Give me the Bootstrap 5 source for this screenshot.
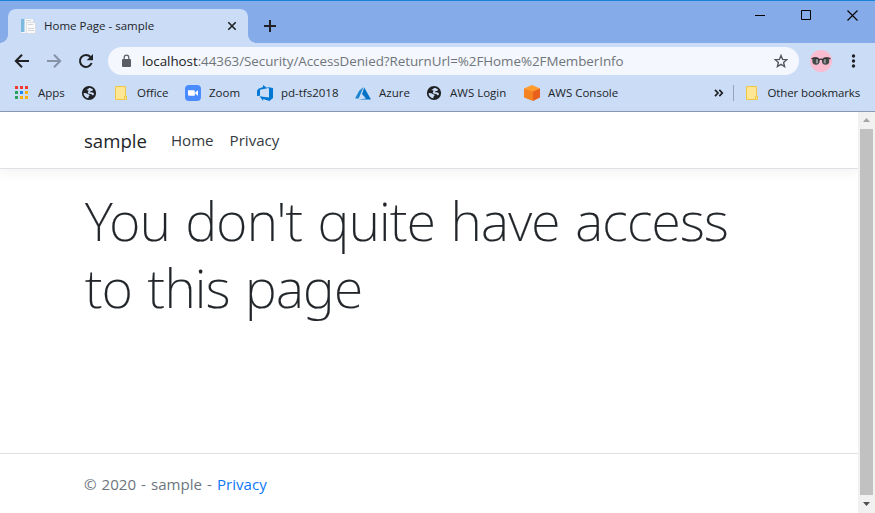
<!DOCTYPE html>
<html lang="en">
<head>
<meta charset="utf-8">
<meta name="viewport" content="width=device-width, initial-scale=1">
<title>Home Page - sample</title>
<link href="https://cdn.jsdelivr.net/npm/bootstrap@5.3.0/dist/css/bootstrap.min.css" rel="stylesheet">
<style>
  body { width: 875px; height: 513px; overflow: hidden; font-family: "Open Sans", "Noto Sans", sans-serif; color: #212529; background: #fff; }
  svg { display: block; flex: none; }
  .tabstrip { height: 43px; background: #85abe9; border-top: 1px solid #1683d9; padding-left: 8px; }
  .browser-tab { width: 240px; height: 34px; margin-top: 8px; background: #cbdcf6; border-radius: 8px 8px 0 0; padding: 0 11px 0 12px; position: relative; }
  .browser-tab::before, .browser-tab::after { content: ""; position: absolute; bottom: 0; width: 8px; height: 8px; }
  .browser-tab::before { left: -8px; background: radial-gradient(circle at 0 0, transparent 7.5px, #cbdcf6 8px); }
  .browser-tab::after { right: -8px; background: radial-gradient(circle at 100% 0, transparent 7.5px, #cbdcf6 8px); }
  .tab-title { font-size: 11.5px; margin-left: 8px; white-space: nowrap; }
  .newtab { margin: 19px 0 0 16px; }
  .winbuttons { gap: 35px; padding: 9px 17px 0 0; }
  .toolbar { height: 34px; background: #cbdcf6; padding: 4px 14px 2px 14px; }
  .omnibox { width: 691px; height: 28px; margin-left: 14px; border-radius: 14px; background: #f4f7fd; padding: 0 11px 0 13px; }
  .address { font-size: 13.4px; letter-spacing: -.05px; color: #70757a; margin-left: 10px; white-space: nowrap; }
  .address b { font-weight: 400; color: #202124; }
  .kebab { margin: 0 2px 0 17px; }
  .bookmarks { height: 35px; background: #cbdcf6; border-bottom: 1px solid #8b9ab3; padding: 0 15px 2px 14px; font-size: 11.5px; white-space: nowrap; }
  .marks { display: grid; grid-template-columns: 67px 32px 72px 72px 98px 71px 98px 96px; }
  .marks > div, .others { display: flex; align-items: center; gap: 8px; }
  .others span { letter-spacing: -.13px; }
  .split { width: 1px; height: 16px; background: #93a3c0; margin: 0 10px 0 9px; }
  .viewport { height: 401px; }
  .webpage { width: 858px; }
  .topnav { height: 57px; border-bottom: 1px solid #dee2e6; box-shadow: 0 4px 12px rgba(0,0,0,.05); padding: 1px 0 0 84px; }
  .brand-name { font-size: 18.6px; }
  .navitem { font-size: 15.1px; color: #343a40; }
  .denied { font-family: "Noto Sans", "Open Sans", sans-serif; font-size: 53.5px; font-weight: 200; letter-spacing: -.72px; word-spacing: 2.2px; line-height: 67.2px; padding: 18px 84px 0 85px; height: 284px; margin: 0; white-space: nowrap; -webkit-text-stroke: .2px #212529; }
  .pagefoot { height: 60px; border-top: 1px solid #dee2e6; padding: 2px 0 0 84px; font-size: 15.1px; word-spacing: 1.1px; color: #6c757d; }
  .pagefoot a { color: #0d78f7; text-decoration: none; }
  .scrollbar { width: 17px; background: #f1f1f1; padding: 6px 2px 7px; }
  .thumb { width: 13px; height: 366px; background: #c1c1c1; }
</style>
</head>
<body>
<svg width="0" height="0" class="position-absolute">
  <symbol id="globe" viewBox="0 0 16 16"><circle cx="8" cy="8" r="7.100" fill="#202124"/><path d="M2.600 8c1.600-.1 3 .1 4 .9 1 .2 2 .5 2 1.300 0 .8-.9.900-1.100 1.600l-.2 1.500C4.600 12.800 2.600 10.700 2.600 8zM8 3c1.800 0 3.200.6 4.100 1.800-.2.900-1.200 1.200-2.200 1.300-.5.300-.9.500-1.200.9.300.5 1.800.2 2.800.5.8.300 1.300.7 1.500 1.300-.2.700-.5 1.200-1 1.700-.7-.2-.9-.8-1.500-1.200-1.200-.4-2.700-.1-3.400-1-.6-1-.2-2 .7-2.400C7.100 5.400 6 5.700 5.500 5.100 6 4.300 7.300 4.200 8 3z" fill="#cbdcf6"/></symbol>
  <symbol id="folder" viewBox="0 0 16 16"><path d="M2.500 1.500h10v9.500h1v3.500h-11z" fill="#ffe694" stroke="#efc84a"/><path d="M11.500 14v-2.500h1.500" fill="none" stroke="#efc84a"/></symbol>
</svg>

<div class="tabstrip d-flex align-items-start">
  <div class="browser-tab d-flex align-items-center">
    <svg width="16" height="16" viewBox="0 0 16 16"><path d="M1 1h12v14H1z" fill="#f4f6f8"/><path d="M1 1h4v13H1z" fill="#7bb9df"/><path d="M4 1h1v13H4z" fill="#b9d9ed"/><path d="M6.500 4.500h9v11h-9z" fill="#f8f8f8" stroke="#cdd1d5" stroke-width=".6"/><path d="M6 2.500h5M8 6.500h5M8 10.500h6M8 12.500h6" stroke="#d2d6da"/></svg>
    <span class="tab-title">Home Page - sample</span>
    <svg class="ms-auto" width="10" height="10" viewBox="0 0 10 10"><path d="M1.300 1.300l7.400 7.400M8.700 1.300L1.300 8.700" stroke="#202124" stroke-width="1.600"/></svg>
  </div>
  <svg class="newtab" width="12" height="12" viewBox="0 0 12 12"><path d="M6 0v12M0 6h12" stroke="#202124" stroke-width="2"/></svg>
  <div class="winbuttons d-flex ms-auto">
    <svg width="11" height="11" viewBox="0 0 11 11"><path d="M0 5.500h10" stroke="#000"/></svg>
    <svg width="11" height="11" viewBox="0 0 11 11"><path d="M.5.5h9v9h-9z" fill="none" stroke="#000"/></svg>
    <svg width="11" height="11" viewBox="0 0 11 11"><path d="M.5.5l10 10M10.500.5l-10 10" stroke="#000" stroke-width="1.100"/></svg>
  </div>
</div>

<div class="toolbar d-flex align-items-center">
  <svg width="16" height="16" viewBox="0 0 16 16"><path d="M15 8H2.500M8 1.700L1.800 8 8 14.300" fill="none" stroke="#202124" stroke-width="2"/></svg>
  <svg class="ms-3" width="16" height="16" viewBox="0 0 16 16"><path d="M1 8h12.500M8 1.700L14.200 8 8 14.300" fill="none" stroke="#8792a7" stroke-width="2"/></svg>
  <svg class="ms-3" width="16" height="16" viewBox="0 0 16 16"><path d="M12.500 4A6 6 0 1 0 13.600 10" fill="none" stroke="#202124" stroke-width="2"/><path d="M15 1v6.300H8.700z" fill="#202124"/></svg>
  <div class="omnibox d-flex align-items-center">
    <svg width="11" height="14" viewBox="0 0 11 14"><path d="M2 5h7q1 0 1 1v6q0 1-1 1H2q-1 0-1-1V6q0-1 1-1z" fill="#5a5e63"/><path d="M3.200 5.500V3.400a2.300 2.300 0 0 1 4.600 0v2.100" fill="none" stroke="#5a5e63" stroke-width="1.200"/></svg>
    <span class="address"><b>localhost</b>:44363/Security/AccessDenied?ReturnUrl=%2FHome%2FMemberInfo</span>
    <svg class="ms-auto" width="14" height="14" viewBox="0 0 14 14"><path d="M7 1.500l1.600 3.900 4.200.3-3.200 2.700 1 4.100L7 10.300l-3.600 2.200 1-4.100L1.200 5.700l4.200-.3z" fill="none" stroke="#53575d" stroke-width="1.400"/></svg>
  </div>
  <svg class="ms-auto" width="22" height="22" viewBox="0 0 22 22"><circle cx="11" cy="11" r="11" fill="#f8bbd0"/><circle cx="6" cy="11" r="3.700" fill="#45494a"/><circle cx="15.600" cy="11" r="3.700" fill="#45494a"/><path d="M1.500 9q4-2.600 7.500.8 2-1.500 4 0 4-3.400 7.500-.8" fill="none" stroke="#332d31" stroke-width="1.200"/><path d="M7 9.200v4M14.800 9.200v4" stroke="#929796" stroke-width="2"/></svg>
  <svg class="kebab" width="10" height="16" viewBox="0 0 10 16"><g fill="#202124"><circle cx="4.500" cy="3" r="1.700"/><circle cx="4.500" cy="8" r="1.700"/><circle cx="4.500" cy="13" r="1.700"/></g></svg>
</div>

<div class="bookmarks d-flex align-items-center">
  <div class="marks">
    <div><svg width="16" height="16" viewBox="0 0 16 16"><path d="M1 1h3v3H1zM6 1h3v3H6zM11 1h3v3h-3z" fill="#f03a30"/><path d="M1 6h3v3H1zM1 11h3v3H1z" fill="#2da05a"/><path d="M6 6h3v3H6z" fill="#1a88ee"/><path d="M11 6h3v3h-3zM6 11h3v3H6zM11 11h3v3h-3z" fill="#fbb00c"/></svg><span>Apps</span></div>
    <div><svg width="16" height="16"><use href="#globe"/></svg></div>
    <div><svg width="16" height="16"><use href="#folder"/></svg><span>Office</span></div>
    <div><svg width="16" height="16" viewBox="0 0 16 16"><rect width="16" height="16" rx="4" fill="#4a8cff"/><path d="M3 5.200h5.500q1.300 0 1.300 1.300v4.300H4.400Q3 10.800 3 9.500zM10.300 7.200L13 5.300v5.400l-2.700-1.900z" fill="#fff"/></svg><span>Zoom</span></div>
    <div><svg width="16" height="16" viewBox="0 0 16 16"><path d="M0 5.700L1.500 3.800 6 2.100V0l4.500 3.200L3 4.800v6L0 11zM16 2.900v10l-3.600 3-6.200-2v2L2.500 11.200l9.500 1.300V3.700L10 2z" fill="#0078d4"/></svg><span>pd-tfs2018</span></div>
    <div><svg width="16" height="16" viewBox="0 0 16 16"><path d="M8.500 2L4.200 5.800 0 13.500h3.700z" fill="#1b86cf"/><path d="M9.200 2.600L7 9l4 4.500-7.500 1H16z" fill="#0072c6"/></svg><span>Azure</span></div>
    <div><svg width="16" height="16"><use href="#globe"/></svg><span>AWS Login</span></div>
    <div><svg width="16" height="16" viewBox="0 0 16 16"><path d="M8 0l8 3.500L9 7 0 3.500z" fill="#ff9a2b"/><path d="M0 3.500L9 6.500V16l-9-3.500z" fill="#f58220"/><path d="M16 3.500L9 6.500V16l7-3.500z" fill="#e8601c"/></svg><span>AWS Console</span></div>
  </div>
  <svg class="ms-auto" width="10" height="8" viewBox="0 0 10 8"><path d="M1 .8L4 4 1 7.200M5.300.8l3 3.200-3 3.200" fill="none" stroke="#202124" stroke-width="1.700"/></svg>
  <div class="split"></div>
  <div class="others"><svg width="16" height="16"><use href="#folder"/></svg><span>Other bookmarks</span></div>
</div>

<div class="viewport d-flex">
  <div class="webpage">
    <nav class="topnav d-flex align-items-center">
      <span class="brand-name">sample</span>
      <span class="navitem ms-4">Home</span>
      <span class="navitem ms-3">Privacy</span>
    </nav>
    <h1 class="denied">You don't quite have access<br>to this page</h1>
    <footer class="pagefoot d-flex align-items-center"><span>© 2020 - sample - <a href="#">Privacy</a></span></footer>
  </div>
  <div class="scrollbar d-flex flex-column align-items-center justify-content-between">
    <svg width="7" height="4" viewBox="0 0 7 4"><path d="M0 4l3.500-4L7 4z" fill="#a3a3a3"/></svg>
    <div class="thumb"></div>
    <svg width="7" height="4" viewBox="0 0 7 4"><path d="M0 0l3.500 4L7 0z" fill="#505050"/></svg>
  </div>
</div>
<script src="https://cdn.jsdelivr.net/npm/bootstrap@5.3.0/dist/js/bootstrap.bundle.min.js"></script>
</body>
</html>
